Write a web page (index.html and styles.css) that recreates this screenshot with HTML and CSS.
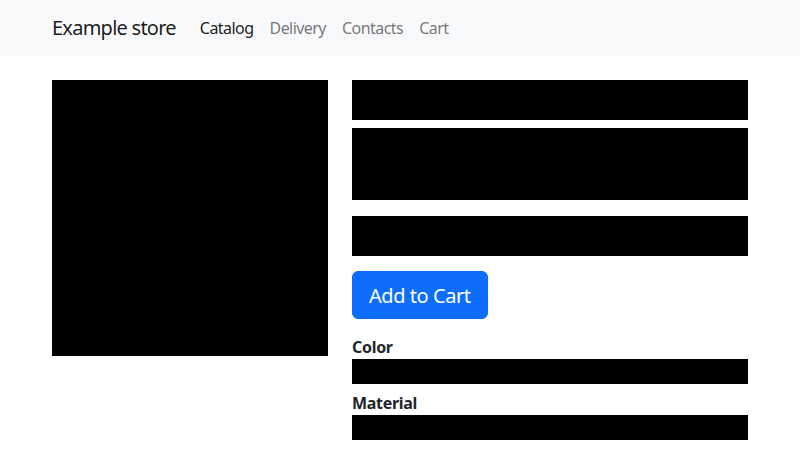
FILE: index.html
```html
<!DOCTYPE html>
<html lang="en">
<head>
<meta charset="utf-8">
<title>Example store</title>
<link rel="stylesheet" href="styles.css">
</head>
<body>
<nav class="navbar">
  <div class="container nav-inner">
    <a class="brand" href="#">Example store</a>
    <ul class="nav-links">
      <li><a class="nav-link active" href="#">Catalog</a></li>
      <li><a class="nav-link" href="#">Delivery</a></li>
      <li><a class="nav-link" href="#">Contacts</a></li>
      <li><a class="nav-link" href="#">Cart</a></li>
    </ul>
  </div>
</nav>
<main class="container content">
  <div class="col-image">
    <div class="product-image"></div>
  </div>
  <div class="col-info">
    <div class="block title-block"></div>
    <div class="block desc-block"></div>
    <div class="block price-block"></div>
    <button class="btn-cart" type="button">Add to Cart</button>
    <div class="prop">
      <div class="prop-label">Color</div>
      <div class="block prop-value"></div>
    </div>
    <div class="prop">
      <div class="prop-label">Material</div>
      <div class="block prop-value"></div>
    </div>
  </div>
</main>
</body>
</html>
```

FILE: styles.css
```css
* { box-sizing: border-box; }
html, body {
  margin: 0;
  padding: 0;
  background: #fff;
  color: #212529;
  font-family: "Noto Sans", "Liberation Sans", sans-serif;
  font-size: 16px;
  line-height: 1.5;
}
.container {
  width: 720px;
  margin: 0 auto;
  padding: 0 12px;
}
.navbar {
  background: #f8f9fa;
  height: 56px;
}
.nav-inner {
  display: flex;
  align-items: center;
  height: 56px;
}
.brand {
  font-size: 20px;
  letter-spacing: -0.75px;
  color: rgba(0,0,0,0.9);
  text-decoration: none;
  margin-right: 16px;
  line-height: 30px;
}
.nav-links {
  display: flex;
  list-style: none;
  margin: 0;
  padding: 0;
}
.nav-link {
  display: block;
  padding: 8px;
  letter-spacing: -0.55px;
  color: rgba(0,0,0,0.55);
  text-decoration: none;
}
.nav-link.active { color: rgba(0,0,0,0.9); }
.content {
  display: flex;
  gap: 24px;
  margin-top: 24px;
}
.col-image { width: 276px; flex: none; }
.product-image {
  width: 276px;
  height: 276px;
  background: #000;
}
.col-info {
  width: 396px;
  display: flex;
  flex-direction: column;
  align-items: flex-start;
}
.block { background: #000; width: 100%; }
.title-block { height: 40px; margin-bottom: 8px; }
.desc-block { height: 72px; margin-bottom: 16px; }
.price-block { height: 40px; margin-bottom: 15px; }
.btn-cart {
  font-family: inherit;
  font-size: 20px;
  letter-spacing: -0.45px;
  line-height: 30px;
  padding: 2px 16px 0;
  height: 48px;
  white-space: nowrap;
  background: #0d6efd;
  color: #fff;
  border: 1px solid #0d6efd;
  border-radius: 6px;
  margin-bottom: 16px;
}
.prop { width: 100%; margin-bottom: 7px; }
.prop-label {
  font-weight: 700;
  line-height: 24px;
  letter-spacing: -0.3px;
}
.prop-value { height: 25px; }
```
